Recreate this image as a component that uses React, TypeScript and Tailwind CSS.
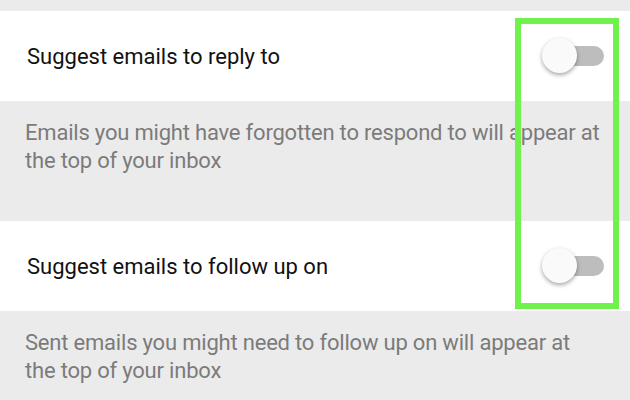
import type { ReactNode } from 'react'

function Toggle() {
    return (
        <div className="relative h-[36px] w-[62px] shrink-0">
            <div className="absolute right-0 top-[8px] h-[20px] w-[56px] rounded-full bg-[#bdbdbd]"></div>
            <div className="absolute left-0 top-0 h-[35px] w-[35px] rounded-full bg-[#fafafa] shadow-[0_2px_4px_rgba(0,0,0,0.35)]"></div>
        </div>
    )
}

function SettingRow({ title, children }: { title: string; children: ReactNode }) {
    return (
        <>
            <div className="flex h-[90px] items-center justify-between bg-white pl-[27px] pr-[26px]">
                <span className="text-[22px] text-[#111]">{title}</span>
                <Toggle />
            </div>
            <div className="bg-[#ebebeb] pl-[25px] pr-[27px] pt-[18px] text-[22px] leading-[28px] tracking-[-0.2px] text-[#7b7b7b]">
                {children}
            </div>
        </>
    )
}

export default function App() {
    return (
        <div className="relative h-[400px] w-[630px] overflow-hidden bg-[#ebebeb] font-['Roboto',sans-serif]">
            <div className="h-[11px]"></div>
            <SettingRow title="Suggest emails to reply to">
                <div className="h-[102px]">Emails you might have forgotten to respond to will appear at the top of your inbox</div>
            </SettingRow>
            <SettingRow title="Suggest emails to follow up on">
                <div className="h-[80px]">Sent emails you might need to follow up on will appear at the top of your inbox</div>
            </SettingRow>
            <div className="pointer-events-none absolute left-[515px] top-[18px] h-[291px] w-[104px] border-[6px] border-[#6ff24c]"></div>
        </div>
    )
}
